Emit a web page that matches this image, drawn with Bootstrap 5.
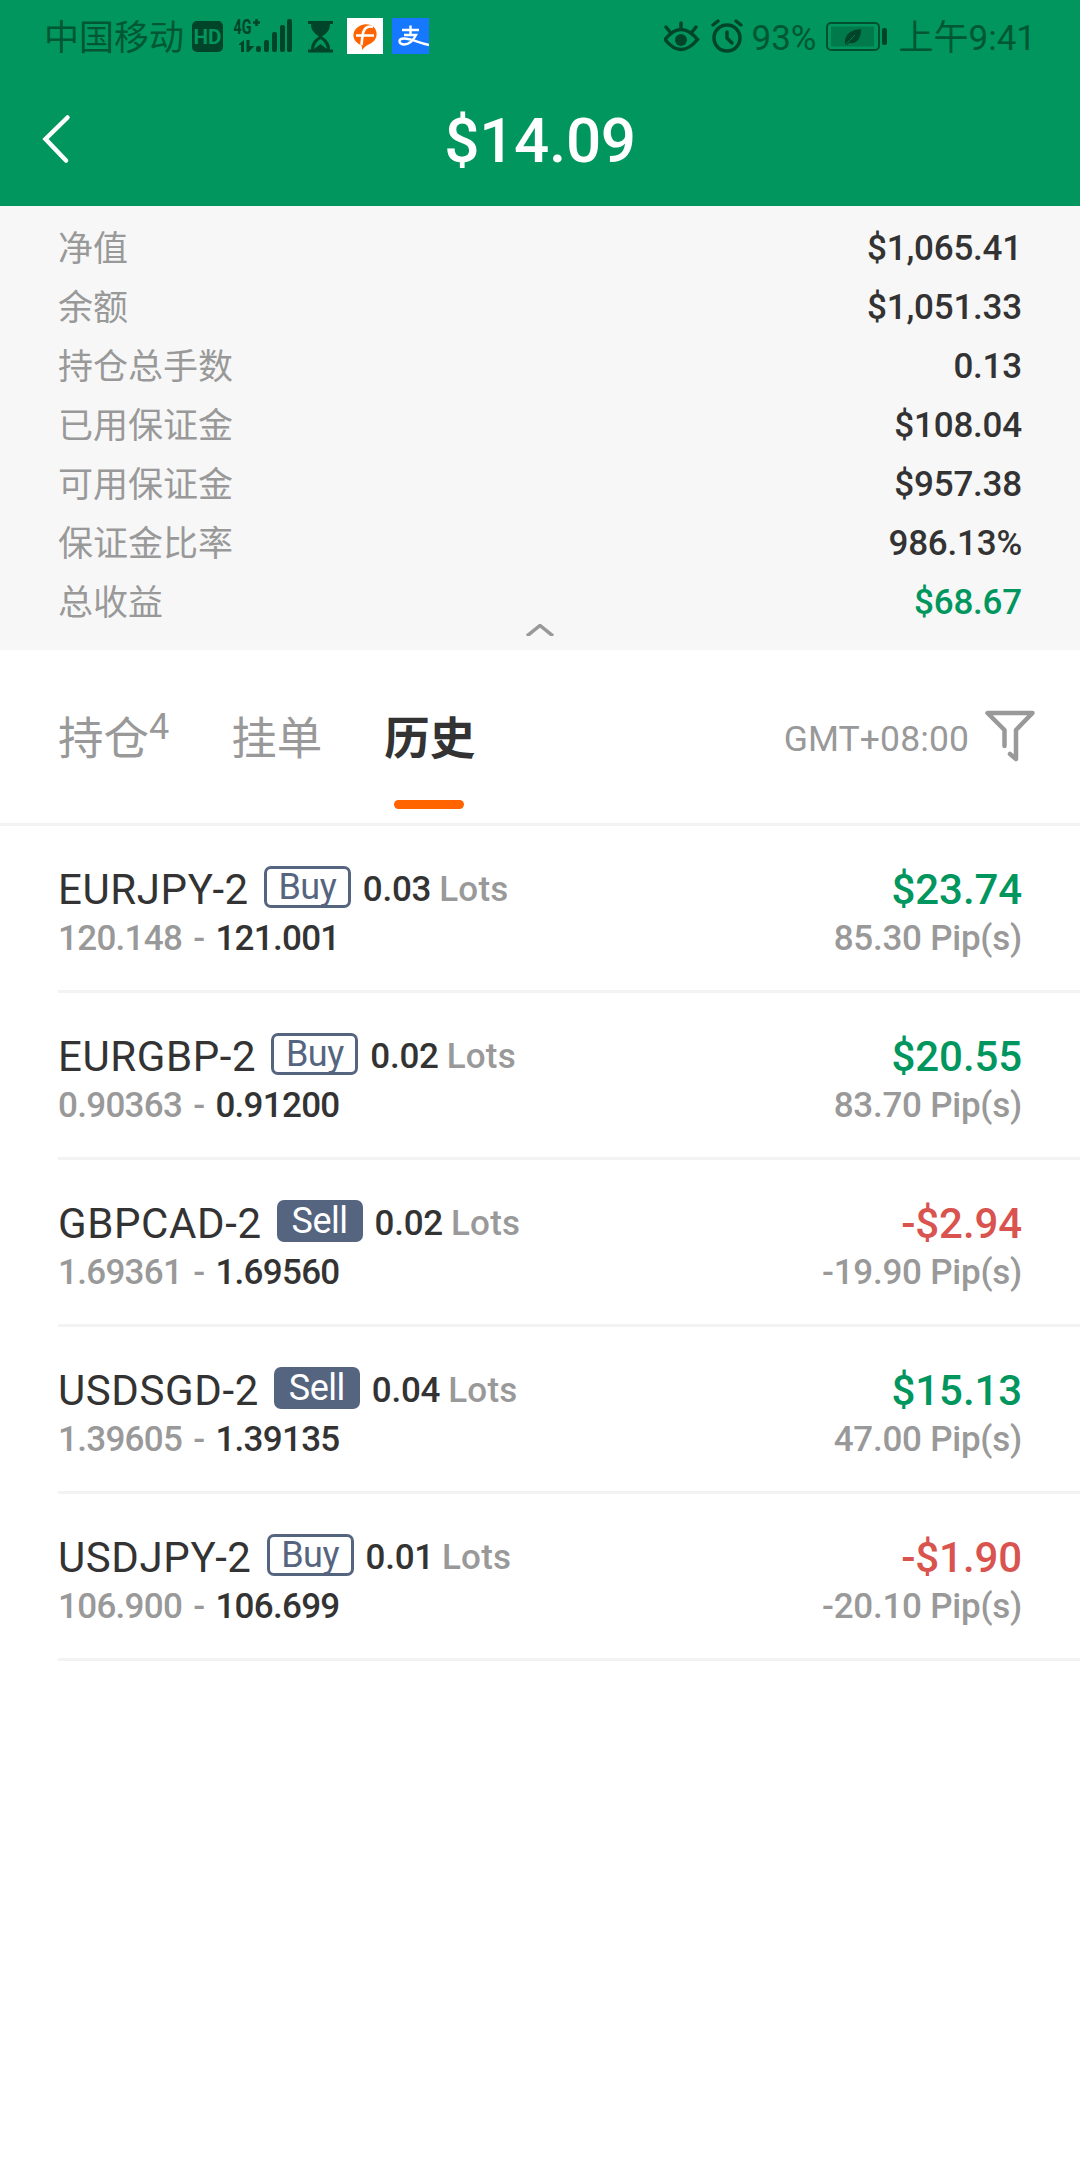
<!DOCTYPE html>
<html lang="zh-CN">
<head>
<meta charset="utf-8">
<meta name="viewport" content="width=device-width, initial-scale=1">
<title>History</title>
<link href="https://cdn.jsdelivr.net/npm/bootstrap@5.3.0/dist/css/bootstrap.min.css" rel="stylesheet">
<style>
body{font-family:Roboto,"Noto Sans CJK SC",sans-serif;color:#333;background:#fff;width:1080px;min-height:2160px;overflow-x:hidden}
svg{display:block;flex:none}
.top-green{background:#00965e;height:206px}
.status-line{height:74px;padding:0 44px 0 44px;color:#005733;font-size:35px;font-weight:400}
.status-line span{line-height:70px;padding-top:4px}
.title-line{height:132px}
.back-mark{left:40px;top:40px}
.title-sum{font-size:62px;font-weight:500;letter-spacing:-.3px;line-height:133px}
.summary{background:#f7f7f7;height:444px;padding:14px 58px 0 58px}
.sum-row{height:59px;line-height:59px;font-size:35px}
.sum-row .num{line-height:58px;letter-spacing:-.2px}
.sum-key{color:#999}
.num{font-weight:500;font-size:35px;letter-spacing:-.25px}
.collapse-mark{left:526px;bottom:14px}
.tab-line{height:176px;border-bottom:3px solid #f3f3f3;padding:0 45px 0 58px}
.tab-item{font-size:45.5px;line-height:167px;padding-top:6px;color:#999}
.tab-item sup{font-size:36px;top:-16px;vertical-align:baseline;line-height:0}
.tab-item.on{color:#333;font-weight:700}
.tab-item.on::after{content:"";position:absolute;left:10px;bottom:14px;width:70px;height:9px;border-radius:5px;background:#ff6400}
.tab-gap{margin-left:62px}
.zone{font-size:35.5px;color:#999;letter-spacing:.1px;padding-top:6px}
.deal{margin-left:58px;height:167px;border-bottom:3px solid #f3f3f3;padding:36px 58px 0 0}
.deal-top{height:56px;line-height:56px}
.deal-bot{height:40px;line-height:42px}
.pair{font-size:42px;letter-spacing:.6px}
.side{height:42px;width:87px;margin:-6px 12px 0 15px;border:3px solid #56657f;border-radius:7px;font-size:36px;line-height:36px;color:#56657f;letter-spacing:-.5px}
.side.sell{background:#56657f;color:#fff;width:86px}
.side+.num{margin-right:8px}
.grey{color:#999}
.unit{letter-spacing:.2px}
.price{letter-spacing:-.7px}
.price .grey{word-spacing:3px}
.amt{font-size:42px;font-weight:500;letter-spacing:-.1px}
.up{color:#00965e}.down{color:#d9534f}
</style>
</head>
<body>
<header class="top-green">
  <div class="status-line d-flex align-items-center">
    <span>中国移动</span>
    <svg width="246" height="56" viewBox="184 9 246 56">
      <g fill="#00452a">
      <rect x="192" y="21" width="31" height="31" rx="5"/>
      <rect x="256" y="46" width="5" height="6" rx="2"/><rect x="264" y="40" width="5" height="12" rx="2"/><rect x="272" y="32" width="5" height="20" rx="2"/><rect x="280" y="25" width="5" height="27" rx="2"/><rect x="287" y="19" width="5" height="33" rx="2"/>
      <path d="M308 21h25v3h-3c0 6-3 9-8 12.500c5 3 8 7 8 13h3v3h-25v-3h3c0-6 3-10 8-13c-5-3.500-8-6.500-8-12.500h-3z"/>
      <path d="M239 44l5-4v12h-3v-7h-2zM246.500 40h3v6h5l-6 6h-2z"/>
      </g>
      <path d="M314 49c1-5 3-8 6.500-10c3.500 2 5.500 5 6.500 10l-6.500-5z" fill="#00965e"/>
      <text x="193.500" y="43.500" font-size="20" font-weight="700" fill="#00965e" textLength="28" lengthAdjust="spacingAndGlyphs">HD</text>
      <text x="233.500" y="33.500" font-size="20" font-weight="700" fill="#00452a" textLength="18" lengthAdjust="spacingAndGlyphs">4G</text>
      <path d="M253 22.500h7M256.500 19v7" stroke="#00452a" stroke-width="2.500"/>
      <rect x="347" y="18" width="36" height="36" fill="#fff"/>
      <path d="M362 50c0-3 0-4-1-5c-11-4-10-18 3-20.500c13-2 17 13 7.500 18.500c-4 2-6 3-9.500 7z" fill="#ff6400"/>
      <path d="M361.500 45c1-9 1-16 6-18c2-.8 4-.5 5.500 0M356 35.500h18" fill="none" stroke="#fff" stroke-width="2.600"/>
      <rect x="392" y="18" width="37" height="36" fill="#1677ff"/>
      <path d="M402 30h17M410.500 25.500v9M404 35h12c-3 6-7 9.500-12 9.500c-6-.5-6-6 0-6c8 0 14 4.500 25 6.500" fill="none" stroke="#fff" stroke-width="2.400"/>
    </svg>
    <svg class="ms-auto" width="88" height="56" viewBox="664 9 88 56" fill="none" stroke="#00452a" stroke-width="3.500" stroke-linecap="round">
      <path d="M665 39.500q16-20 32.500 0q-16.500 20-32.500 0zM681 23v6M666 27l4 5M696 27l-4 5"/><circle cx="681" cy="40" r="6" fill="#00452a" stroke="none"/>
      <circle cx="727" cy="38" r="13"/><path d="M713 25l5-4M741 25l-5-4M727 32v6l5 5" />
    </svg>
    <span>93%</span>
    <svg class="mx-2" width="66" height="56" viewBox="825 9 66 56">
      <rect x="827" y="23" width="52" height="27" rx="4" fill="none" stroke="#00502f" stroke-width="2"/>
      <rect x="831" y="26.500" width="43" height="20" fill="#007a4b"/><rect x="882" y="28" width="5" height="17" rx="2" fill="#00452a"/>
      <path d="M845 44c-1-9 5-14 16-15c0 10-4 15-12 14l-2 2z" fill="#00452a"/><path d="M846 44l9-9" stroke="#007a4b"/>
    </svg>
    <span>上午9:41</span>
  </div>
  <div class="title-line position-relative text-white">
    <svg class="back-mark position-absolute" width="32" height="50" viewBox="40 114 32 50" fill="none" stroke="#fff" stroke-width="4.500" stroke-linecap="round"><path d="M67.500 117.500L45.500 139L66 160.500"/></svg>
    <div class="title-sum text-center">$14.09</div>
  </div>
</header>
<section class="summary position-relative">
  <div class="sum-row d-flex justify-content-between"><span class="sum-key">净值</span><span class="num">$1,065.41</span></div>
  <div class="sum-row d-flex justify-content-between"><span class="sum-key">余额</span><span class="num">$1,051.33</span></div>
  <div class="sum-row d-flex justify-content-between"><span class="sum-key">持仓总手数</span><span class="num">0.13</span></div>
  <div class="sum-row d-flex justify-content-between"><span class="sum-key">已用保证金</span><span class="num">$108.04</span></div>
  <div class="sum-row d-flex justify-content-between"><span class="sum-key">可用保证金</span><span class="num">$957.38</span></div>
  <div class="sum-row d-flex justify-content-between"><span class="sum-key">保证金比率</span><span class="num">986.13%</span></div>
  <div class="sum-row d-flex justify-content-between"><span class="sum-key">总收益</span><span class="num up">$68.67</span></div>
  <svg class="collapse-mark position-absolute" width="28" height="12" fill="none" stroke="#999" stroke-width="3.500"><path d="M1 12L14 1.500L27 12"/></svg>
</section>
<nav class="tab-line d-flex align-items-center text-nowrap">
  <div class="tab-item">持仓<sup>4</sup></div>
  <div class="tab-item tab-gap">挂单</div>
  <div class="tab-item tab-gap on position-relative">历史</div>
  <span class="zone ms-auto me-3">GMT+08:00</span>
  <svg width="50" height="54" viewBox="985 710 50 54" fill="none" stroke="#999" stroke-width="4.500" stroke-linecap="round" stroke-linejoin="round"><path d="M1004.500 746v-16l-17-17h45l-16.500 17v29l-6-5"/></svg>
</nav>
<main>
  <div class="deal">
    <div class="deal-top d-flex align-items-center"><span class="pair">EURJPY-2</span><span class="side text-center">Buy</span><span class="num">0.03</span><span class="num grey unit">Lots</span><span class="amt up ms-auto">$23.74</span></div>
    <div class="deal-bot d-flex justify-content-between num"><span class="price"><span class="grey">120.148 - </span>121.001</span><span class="grey">85.30 Pip(s)</span></div>
  </div>
  <div class="deal">
    <div class="deal-top d-flex align-items-center"><span class="pair">EURGBP-2</span><span class="side text-center">Buy</span><span class="num">0.02</span><span class="num grey unit">Lots</span><span class="amt up ms-auto">$20.55</span></div>
    <div class="deal-bot d-flex justify-content-between num"><span class="price"><span class="grey">0.90363 - </span>0.91200</span><span class="grey">83.70 Pip(s)</span></div>
  </div>
  <div class="deal">
    <div class="deal-top d-flex align-items-center"><span class="pair">GBPCAD-2</span><span class="side sell text-center">Sell</span><span class="num">0.02</span><span class="num grey unit">Lots</span><span class="amt down ms-auto">-$2.94</span></div>
    <div class="deal-bot d-flex justify-content-between num"><span class="price"><span class="grey">1.69361 - </span>1.69560</span><span class="grey">-19.90 Pip(s)</span></div>
  </div>
  <div class="deal">
    <div class="deal-top d-flex align-items-center"><span class="pair">USDSGD-2</span><span class="side sell text-center">Sell</span><span class="num">0.04</span><span class="num grey unit">Lots</span><span class="amt up ms-auto">$15.13</span></div>
    <div class="deal-bot d-flex justify-content-between num"><span class="price"><span class="grey">1.39605 - </span>1.39135</span><span class="grey">47.00 Pip(s)</span></div>
  </div>
  <div class="deal">
    <div class="deal-top d-flex align-items-center"><span class="pair">USDJPY-2</span><span class="side text-center">Buy</span><span class="num">0.01</span><span class="num grey unit">Lots</span><span class="amt down ms-auto">-$1.90</span></div>
    <div class="deal-bot d-flex justify-content-between num"><span class="price"><span class="grey">106.900 - </span>106.699</span><span class="grey">-20.10 Pip(s)</span></div>
  </div>
</main>
<script src="https://cdn.jsdelivr.net/npm/bootstrap@5.3.0/dist/js/bootstrap.bundle.min.js"></script>
</body>
</html>
